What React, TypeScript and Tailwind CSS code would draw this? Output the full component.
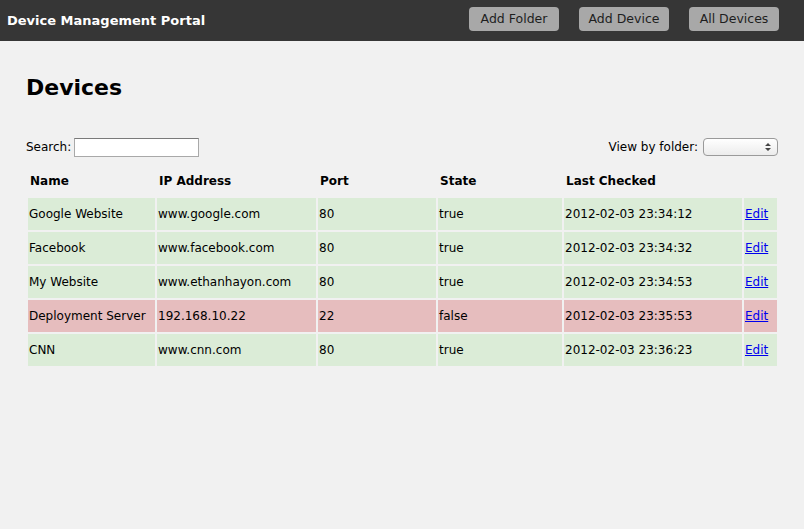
import React from 'react';

type Device = {
  name: string;
  ip: string;
  port: number;
  state: boolean;
  checked: string;
};

const devices: Device[] = [
  { name: 'Google Website', ip: 'www.google.com', port: 80, state: true, checked: '2012-02-03 23:34:12' },
  { name: 'Facebook', ip: 'www.facebook.com', port: 80, state: true, checked: '2012-02-03 23:34:32' },
  { name: 'My Website', ip: 'www.ethanhayon.com', port: 80, state: true, checked: '2012-02-03 23:34:53' },
  { name: 'Deployment Server', ip: '192.168.10.22', port: 22, state: false, checked: '2012-02-03 23:35:53' },
  { name: 'CNN', ip: 'www.cnn.com', port: 80, state: true, checked: '2012-02-03 23:36:23' },
];

function NavButton({ label }: { label: string }) {
  return (
    <button className="w-[90px] h-[24px] rounded-[4px] bg-[#a8a8a8] text-[12.5px] text-[#1e1e1e]">
      {label}
    </button>
  );
}

export default function App() {
  return (
    <div className="min-h-[529px] bg-[#f1f1f1] text-black font-['DejaVu_Sans',sans-serif]">
      <div className="flex h-[41px] items-center justify-between bg-[#363636] pl-[7px] pr-[25px]">
        <h1 className="text-[13px] font-bold text-white">Device Management Portal</h1>
        <div className="flex gap-[20px] self-start pt-[7px]">
          <NavButton label="Add Folder" />
          <NavButton label="Add Device" />
          <NavButton label="All Devices" />
        </div>
      </div>

      <div className="px-[26px]">
        <h2 className="pt-[30px] text-[22px] font-bold leading-[34px]">Devices</h2>

        <div className="mt-[32px] flex h-[20px] items-center justify-between text-[12px]">
          <label className="flex items-center gap-[3px]">
            Search:
            <input className="h-[19px] w-[125px] border border-[#a9a9a9] border-t-[#7a7a7a] bg-white" />
          </label>
          <label className="flex items-center gap-[5px]">
            View by folder:
            <span className="relative block h-[18px] w-[75px] rounded-[4px] border border-[#9a9a9a] bg-gradient-to-b from-white to-[#ececec]">
              <svg className="absolute right-[6px] top-[3px]" width="6" height="10" viewBox="0 0 6 10">
                <path d="M0 4 L3 1 L6 4 Z M0 6 L3 9 L6 6 Z" fill="#444" />
              </svg>
            </span>
          </label>
        </div>

        <table className="mt-[13px] w-[753px] border-separate border-spacing-[2px] text-[12px]">
          <thead>
            <tr className="text-left align-top">
              <th className="h-[24px] w-[127px] pl-[2px] font-bold">Name</th>
              <th className="w-[159px] pl-[2px] font-bold">IP Address</th>
              <th className="w-[118px] pl-[2px] font-bold">Port</th>
              <th className="w-[124px] pl-[2px] font-bold">State</th>
              <th className="w-[178px] pl-[2px] font-bold">Last Checked</th>
              <th className="w-[33px]"></th>
            </tr>
          </thead>
          <tbody>
            {devices.map((d) => {
              const bg = d.state ? 'bg-[#dbecd7]' : 'bg-[#e6bdbe]';
              return (
                <tr key={d.name}>
                  <td className={`h-[32px] pl-[1px] ${bg}`}>{d.name}</td>
                  <td className={`pl-[1px] ${bg}`}>{d.ip}</td>
                  <td className={`pl-[1px] ${bg}`}>{d.port}</td>
                  <td className={`pl-[1px] ${bg}`}>{d.state ? 'true' : 'false'}</td>
                  <td className={`pl-[1px] ${bg}`}>{d.checked}</td>
                  <td className={`pl-[1px] ${bg}`}>
                    <a href="#" className="text-[#0000ee] underline">Edit</a>
                  </td>
                </tr>
              );
            })}
          </tbody>
        </table>
      </div>
    </div>
  );
}
